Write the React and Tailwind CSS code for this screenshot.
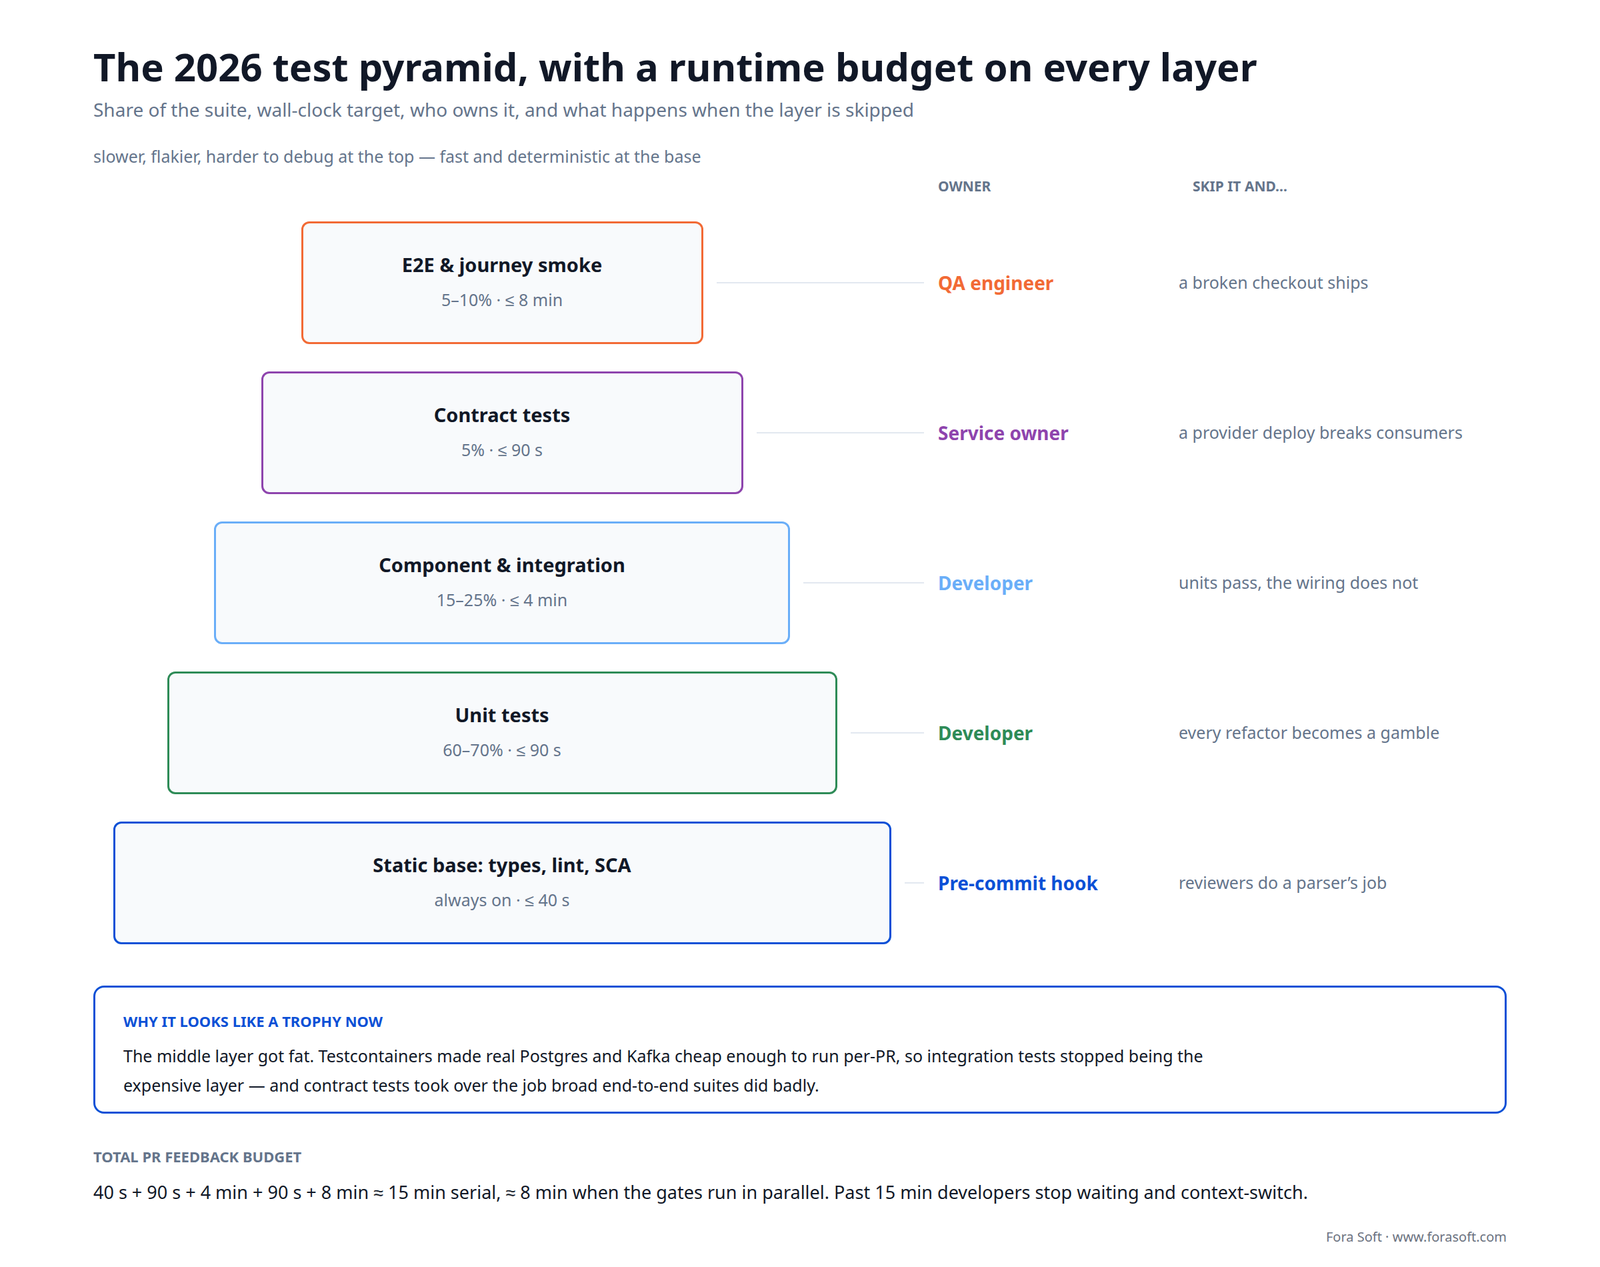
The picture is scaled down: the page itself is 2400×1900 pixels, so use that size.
export default function App() {
  const rows = [
    { t: "E2E & journey smoke", s: "5–10% · ≤ 8 min", w: "w-[603px]", b: "border-[#f26a35]", c: "text-[#f26a35]", o: "QA engineer", k: "a broken checkout ships" },
    { t: "Contract tests", s: "5% · ≤ 90 s", w: "w-[723px]", b: "border-[#8e44ad]", c: "text-[#8e44ad]", o: "Service owner", k: "a provider deploy breaks consumers" },
    { t: "Component & integration", s: "15–25% · ≤ 4 min", w: "w-[864px]", b: "border-[#6aaef8]", c: "text-[#6aaef8]", o: "Developer", k: "units pass, the wiring does not" },
    { t: "Unit tests", s: "60–70% · ≤ 90 s", w: "w-[1005px]", b: "border-[#2e8b57]", c: "text-[#2e8b57]", o: "Developer", k: "every refactor becomes a gamble" },
    { t: "Static base: types, lint, SCA", s: "always on · ≤ 40 s", w: "w-[1167px]", b: "border-[#0b50d6]", c: "text-[#0b50d6]", o: "Pre-commit hook", k: "reviewers do a parser’s job" },
  ];
  return (
    <div className="w-[2400px] h-[1900px] bg-white px-[140px] pt-[62px] font-[family-name:'DejaVu_Sans',sans-serif] text-[#111827]">
      <h1 className="text-[58px] font-bold leading-[76px] text-[#111827]">The 2026 test pyramid, with a runtime budget on every layer</h1>
      <p className="text-[28px] leading-[36px] text-[#64748b] mt-[8px]">Share of the suite, wall-clock target, who owns it, and what happens when the layer is skipped</p>
      <p className="text-[25px] leading-[32px] text-[#64748b] mt-[36px]">slower, flakier, harder to debug at the top — fast and deterministic at the base</p>
      <div className="flex mt-[16px] h-[28px] items-center text-[21px] font-bold text-[#64748b]">
        <div className="w-[1267px]" />
        <div className="w-[382px]">OWNER</div>
        <div>SKIP IT AND…</div>
      </div>
      <div className="flex flex-col gap-[41px] mt-[38px]">
        {rows.map((r, i) => (
          <div key={i} className="flex items-center h-[184px]">
            <div className="w-[1246px] flex items-center h-full">
              <div className="flex-1" />
              <div className={`${r.w} h-full rounded-[12px] border-[3px] ${r.b} bg-[#f8fafc] flex flex-col items-center justify-center`}>
                <div className="text-[29px] font-bold leading-[36px] text-[#111827] mt-[-4px]">{r.t}</div>
                <div className="text-[25px] leading-[32px] text-[#64748b] mt-[18px]">{r.s}</div>
              </div>
              <div className="flex-1 pl-[20px]">
                <div className="h-[2px] bg-[#e2e8f0]" />
              </div>
            </div>
            <div className={`w-[382px] pl-[21px] text-[28px] font-bold ${r.c}`}>{r.o}</div>
            <div className="text-[25px] text-[#64748b]">{r.k}</div>
          </div>
        ))}
      </div>
      <div className="mt-[62px] rounded-[16px] border-[3px] border-[#0b50d6] px-[42px] pt-[36px] pb-[24px] h-[192px]">
        <div className="text-[22px] font-bold text-[#0b50d6] leading-[28px]">WHY IT LOOKS LIKE A TROPHY NOW</div>
        <p className="mt-[16px] text-[25px] leading-[44px] text-[#111827] max-w-[1620px]">The middle layer got fat. Testcontainers made real Postgres and Kafka cheap enough to run per-PR, so integration tests stopped being the expensive layer — and contract tests took over the job broad end-to-end suites did badly.</p>
      </div>
      <div className="mt-[50px] text-[22px] font-bold text-[#64748b] leading-[28px]">TOTAL PR FEEDBACK BUDGET</div>
      <div className="mt-[22px] text-[27px] leading-[36px] text-[#111827] whitespace-nowrap">40 s + 90 s + 4 min + 90 s + 8 min ≈ 15 min serial, ≈ 8 min when the gates run in parallel. Past 15 min developers stop waiting and context-switch.</div>
      <div className="mt-[34px] text-right text-[20px] text-[#6b7280]">Fora Soft · www.forasoft.com</div>
    </div>
  );
}
